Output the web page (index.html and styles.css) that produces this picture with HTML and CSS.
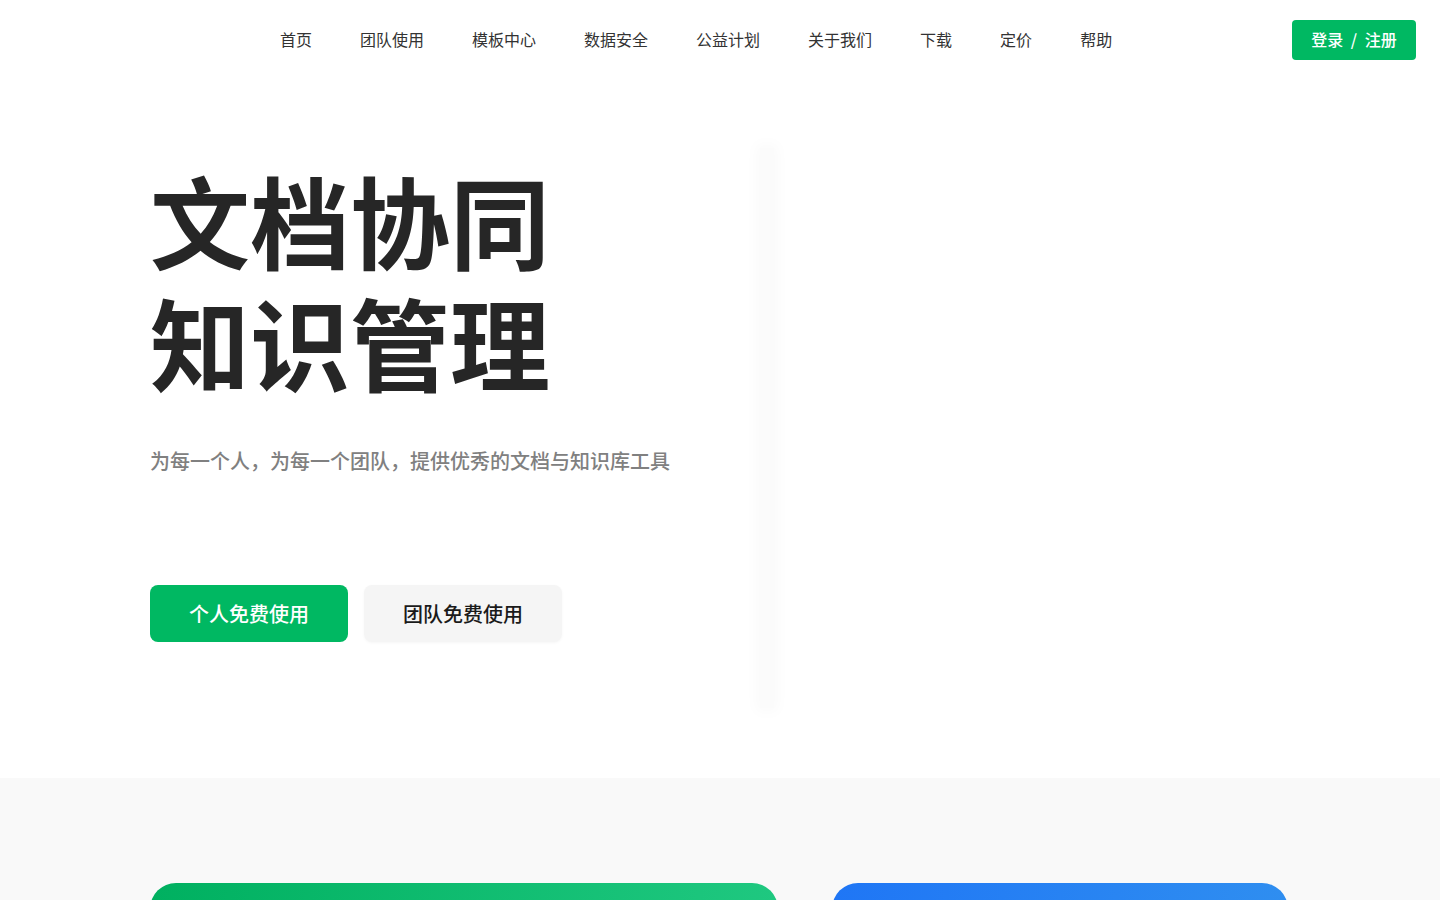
FILE: index.html
```html
<!DOCTYPE html>
<html lang="zh-CN">
<head>
<meta charset="utf-8">
<title>文档协同 知识管理</title>
<link rel="stylesheet" href="styles.css">
</head>
<body>
<header class="topbar">
  <nav class="nav">
    <a class="nav-item" href="#">首页</a>
    <a class="nav-item" href="#">团队使用</a>
    <a class="nav-item" href="#">模板中心</a>
    <a class="nav-item" href="#">数据安全</a>
    <a class="nav-item" href="#">公益计划</a>
    <a class="nav-item" href="#">关于我们</a>
    <a class="nav-item" href="#">下载</a>
    <a class="nav-item" href="#">定价</a>
    <a class="nav-item" href="#">帮助</a>
  </nav>
  <a class="login" href="#">登录 / 注册</a>
</header>
<section class="hero">
  <div class="hero-text">
    <h1 class="title">文档协同<br>知识管理</h1>
    <p class="subtitle">为每一个人，为每一个团队，提供优秀的文档与知识库工具</p>
    <div class="actions">
      <a class="btn btn-primary" href="#">个人免费使用</a>
      <a class="btn btn-secondary" href="#">团队免费使用</a>
    </div>
  </div>
  <div class="hero-visual"><div class="visual-shadow"></div></div>
</section>
<section class="features">
  <div class="card card-green"></div>
  <div class="card card-blue"></div>
</section>
</body>
</html>
```
FILE: styles.css
```css
* { box-sizing: border-box; }
html, body { margin: 0; padding: 0; }
body {
  font-family: "Noto Sans CJK SC", "Noto Sans", sans-serif;
  background: #fff;
  color: #262626;
  overflow: hidden;
}
a { text-decoration: none; }

.topbar {
  height: 80px;
  display: flex;
  align-items: center;
  padding: 0 24px 0 280px;
}
.nav {
  display: flex;
  gap: 48px;
  flex: 1;
  padding-bottom: 2px;
}
.nav-item {
  font-size: 16px;
  line-height: 24px;
  color: #333;
}
.login {
  width: 124px;
  height: 40px;
  border-radius: 4px;
  background: #00b862;
  color: #fff;
  font-size: 16px;
  font-weight: 500;
  word-spacing: 4px;
  display: flex;
  align-items: center;
  justify-content: center;
  padding-bottom: 2px;
}

.hero {
  height: 698px;
  display: flex;
  padding: 78px 0 0 150px;
}
.hero-text {
  width: 610px;
}
.title {
  margin: 0;
  font-size: 100px;
  line-height: 122px;
  font-weight: 700;
  color: #262626;
}
.subtitle {
  margin: 45px 0 0;
  font-size: 20px;
  line-height: 28px;
  font-weight: 500;
  color: #808080;
}
.actions {
  display: flex;
  gap: 16px;
  margin-top: 110px;
}
.btn {
  width: 198px;
  height: 57px;
  border-radius: 8px;
  font-size: 20px;
  font-weight: 500;
  display: flex;
  align-items: center;
  justify-content: center;
}
.btn-primary { background: #00b862; color: #fff; }
.btn-secondary {
  background: #f5f5f5;
  color: #1a1a1a;
  box-shadow: 0 1px 3px rgba(0,0,0,0.04);
}
.visual-shadow {
  width: 14px;
  height: 560px;
  margin-top: -10px;
  background: #fbfbfb;
  box-shadow: 0 0 14px 4px rgba(0,0,0,0.025);
}

.features {
  background: #f9f9f9;
  height: 200px;
  display: flex;
  gap: 54px;
  padding: 105px 0 0 150px;
}
.card {
  height: 300px;
  border-radius: 26px;
}
.card-green {
  width: 628px;
  background: linear-gradient(90deg, #00b060, #1fc880);
}
.card-blue {
  width: 456px;
  background: linear-gradient(90deg, #1f76f5, #2f8ef0);
}
```
